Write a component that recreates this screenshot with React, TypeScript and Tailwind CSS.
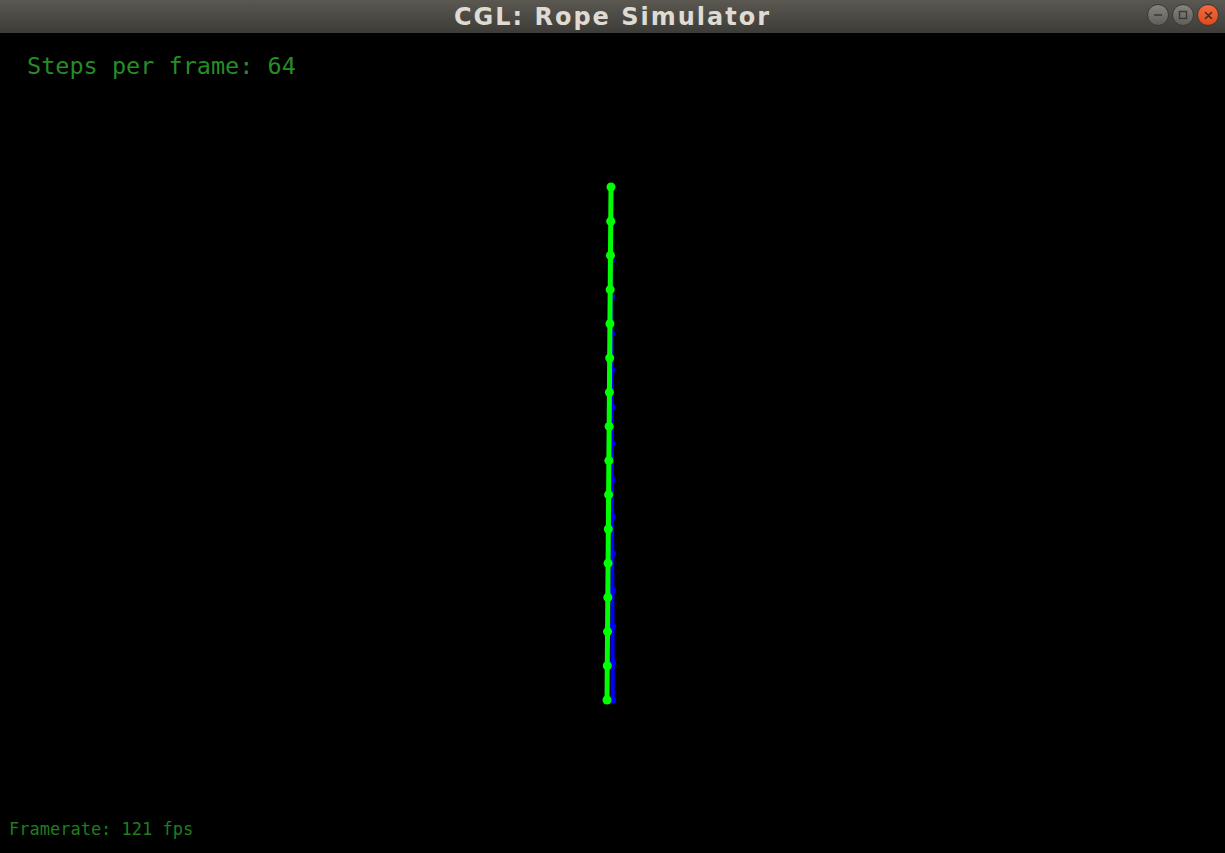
import React from 'react';

// rope node positions (page coordinates)
const greenNodes = Array.from({ length: 16 }, (_, i) => ({
  x: 611 - (i / 15) * 4,
  y: 187 + i * 34.2,
}));

const blueNodes = Array.from({ length: 15 }, (_, i) => ({
  x: 611 + (i / 14) * 1.8,
  y: 187 + i * 36.64,
}));

const TitleButton = ({ kind }: { kind: 'min' | 'max' | 'close' }) => {
  if (kind === 'close') {
    return (
      <div className="flex h-[22px] w-[22px] items-center justify-center rounded-full border border-[#3a3935] bg-linear-to-b from-[#f46a3c] to-[#df4a1c]">
        <svg width="9" height="9" viewBox="0 0 9 9">
          <path d="M1.5 1.5 L7.5 7.5 M7.5 1.5 L1.5 7.5" stroke="#4a2a1c" strokeWidth="1.6" strokeLinecap="round" />
        </svg>
      </div>
    );
  }
  return (
    <div className="flex h-[22px] w-[22px] items-center justify-center rounded-full border border-[#3a3935] bg-linear-to-b from-[#85847e] to-[#5f5e59]">
      {kind === 'min' ? (
        <svg width="10" height="10" viewBox="0 0 10 10">
          <path d="M1 5 H9" stroke="#3a3935" strokeWidth="1.5" />
        </svg>
      ) : (
        <svg width="10" height="10" viewBox="0 0 10 10">
          <rect x="1.5" y="1.5" width="7" height="7" fill="none" stroke="#3a3935" strokeWidth="1.4" />
        </svg>
      )}
    </div>
  );
};

export default function App() {
  return (
    <div className="flex h-[853px] w-[1225px] flex-col overflow-hidden bg-black">
      {/* window title bar */}
      <div className="relative flex h-[33px] shrink-0 items-center justify-center bg-linear-to-b from-[#5b5851] to-[#3d3c38]">
        <span
          className="text-[24px] font-bold leading-none tracking-[2px] text-[#dfdbd2]"
          style={{ fontFamily: '"DejaVu Sans", sans-serif' }}
        >
          CGL: Rope Simulator
        </span>
        <div className="absolute right-[6px] top-[4px] flex gap-[3px]">
          <TitleButton kind="min" />
          <TitleButton kind="max" />
          <TitleButton kind="close" />
        </div>
      </div>

      {/* simulation viewport */}
      <div
        className="relative flex flex-1 flex-col"
        style={{ fontFamily: '"DejaVu Sans Mono", monospace' }}
      >
        <svg className="absolute inset-0" width="1225" height="820" viewBox="0 33 1225 820">
          <polyline
            points={blueNodes.map((n) => `${n.x},${n.y}`).join(' ')}
            fill="none"
            stroke="#0000ff"
            strokeWidth="4"
          />
          {blueNodes.map((n, i) => (
            <circle key={i} cx={n.x} cy={n.y} r="3.5" fill="#0000ff" />
          ))}
          <polyline
            points={greenNodes.map((n) => `${n.x},${n.y}`).join(' ')}
            fill="none"
            stroke="#00ff00"
            strokeWidth="5"
          />
          {greenNodes.map((n, i) => (
            <circle key={i} cx={n.x} cy={n.y} r="4.5" fill="#00ff00" />
          ))}
        </svg>

        <div className="relative pl-[27px] pt-[22px] text-[23.5px] leading-[23px] text-[#268c26]">
          Steps per frame: 64
        </div>

        <div className="relative mt-auto pb-[15px] pl-[9px] text-[17px] leading-[17px] text-[#1f7d1f]">
          Framerate: 121 fps
        </div>
      </div>
    </div>
  );
}
